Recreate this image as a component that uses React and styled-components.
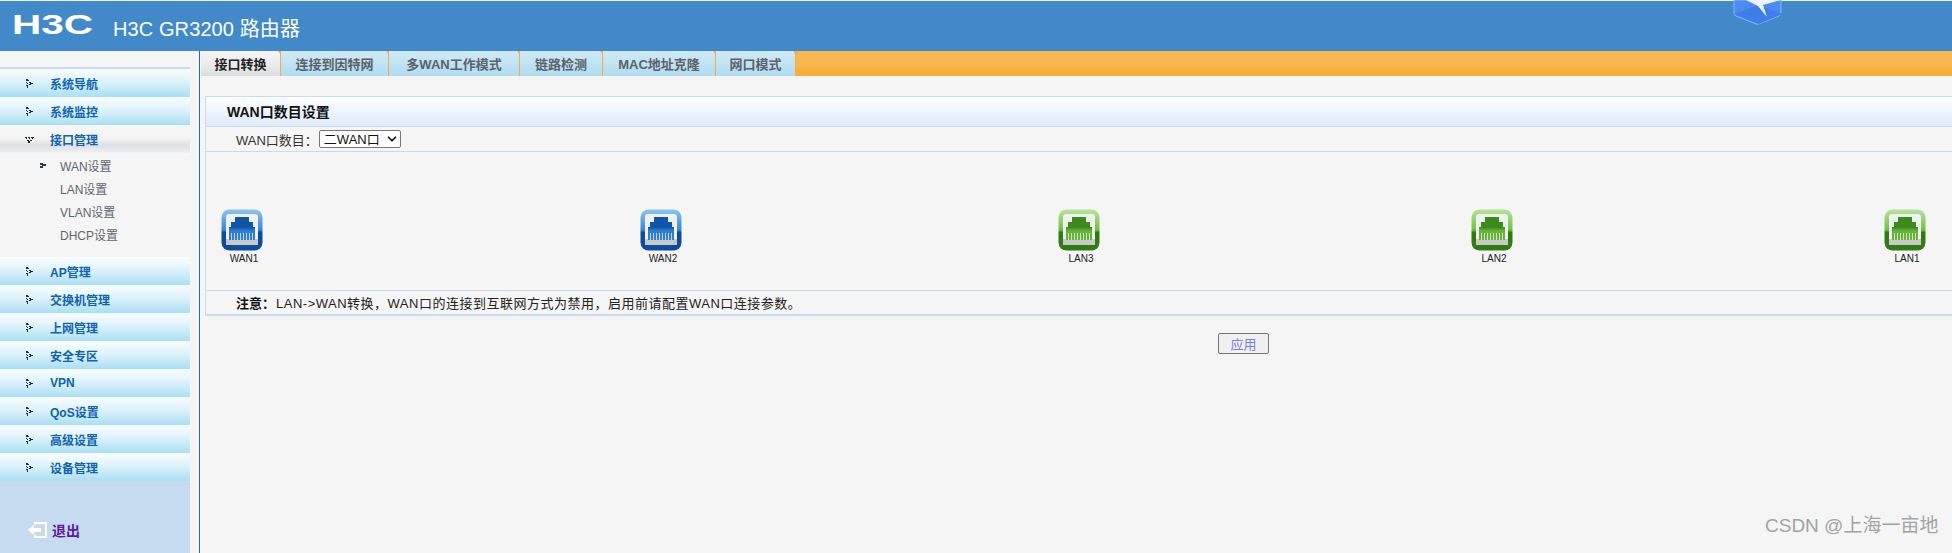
import React from 'react'
import styled, { createGlobalStyle } from 'styled-components'
import { ChevronDown } from 'lucide-react'

const GlobalStyle = createGlobalStyle`
  html, body {
    margin: 0;
    padding: 0;
    background: #f5f5f5;
  }
  body {
    font-family: "Liberation Sans", "Noto Sans CJK SC", sans-serif;
    font-size: 12px;
  }
`

const Page = styled.div`
  position: relative;
  width: 1952px;
  height: 553px;
  overflow: hidden;
  display: flex;
  flex-direction: column;
`

const Header = styled.header`
  height: 50px;
  border-top: 1px solid #f2f2f2;
  background: #4189c9;
  display: flex;
  align-items: center;
  flex-shrink: 0;
`

const Logo = styled.svg`
  margin: 0 0 5px 12px;
  overflow: visible;
  color: #fff;
`

const Title = styled.h1`
  margin: 0 0 0 20px;
  font-size: 20px;
  font-weight: normal;
  letter-spacing: 0.1px;
  color: #fff;
  white-space: nowrap;
  position: relative;
  top: 1px;
`

const Badge = styled.svg`
  position: absolute;
  left: 1733px;
  top: 0;
`

const Body = styled.div`
  flex: 1;
  display: flex;
  min-height: 0;
`

const Side = styled.aside`
  width: 199px;
  border-right: 1px solid #1f6fc0;
  flex-shrink: 0;
`

const Menu = styled.nav`
  width: 190px;
  height: 486px;
  margin-top: 16px;
  border-top: 2px solid #c6dcf0;
  display: flex;
  flex-direction: column;
`

const MenuItem = styled.div`
  height: 28px;
  flex-shrink: 0;
  display: flex;
  align-items: center;
  padding-left: 25px;
  gap: 16px;
  font-weight: bold;
  color: #0f62ae;
  background: ${p =>
    p.$open
      ? 'linear-gradient(#f6f6f6 0%, #f3f3f3 50%, #dde1e4 72%, #eef0f1 100%)'
      : 'linear-gradient(#f9fdff 0%, #e6f6fc 35%, #c2e8f6 75%, #a9dff3 100%)'};
`

const SubList = styled.div`
  padding: 1px 0 11px 40px;
  display: flex;
  flex-direction: column;
`

const SubItem = styled.div`
  height: 23px;
  display: flex;
  align-items: center;
  gap: 14px;
  color: #5f6670;
  padding-left: ${p => (p.$current ? '0' : '20px')};
`

const Logout = styled.div`
  flex: 1;
  background: #c6dbf0;
  padding: 23px 0 0 28px;
  box-sizing: border-box;
  display: flex;
  align-items: center;
  gap: 5px;
  color: #5b1a96;
  font-size: 14px;
  font-weight: bold;
`

const Main = styled.main`
  flex: 1;
  min-width: 0;
  display: flex;
  flex-direction: column;
`

const TabBar = styled.div`
  height: 25px;
  margin-left: 1px;
  display: flex;
  background: linear-gradient(#f8b84f 0%, #f8b850 55%, #f7ae36 78%, #f7ae36 100%);
`

const Tab = styled.div`
  position: relative;
  width: ${p => p.$w}px;
  border-right: 1px solid #f5ab36;
  box-sizing: border-box;
  display: flex;
  align-items: center;
  justify-content: center;
  font-size: 13px;
  font-weight: bold;
  color: ${p => (p.$active ? '#222' : '#5c6166')};
  background: ${p =>
    p.$active
      ? 'linear-gradient(#f5f5f5 0%, #ececec 50%, #d9dcdd 100%)'
      : 'linear-gradient(#cfe9f5 0%, #c0e3f3 50%, #aedcf0 100%)'};

  &::after {
    content: '';
    position: absolute;
    right: -4px;
    top: 0;
    border-left: 3.5px solid transparent;
    border-right: 3.5px solid transparent;
    border-top: 4px solid #f5ab36;
  }
`

const Panel = styled.section`
  margin: 20px 0 0 5px;
  border: 1px solid #c6dcf2;
  border-right: none;
  border-bottom: 2px solid #c6dcf2;
`

const PanelTitle = styled.h2`
  margin: 0;
  height: 28px;
  padding: 0 0 1px 21px;
  display: flex;
  align-items: center;
  font-size: 14px;
  color: #111;
  background: linear-gradient(#fbfdff 0%, #eaf3fc 60%, #dfeafa 100%);
  border-bottom: 1px solid #c6dcf2;
`

const CountRow = styled.div`
  height: 24px;
  padding-left: 30px;
  display: flex;
  align-items: center;
  font-size: 13px;
  color: #333;
  border-bottom: 1px solid #c6dcf2;
`

const SelectWrap = styled.span`
  position: relative;
  display: block;
  width: 82px;
  height: 18px;
  margin-left: 1px;

  svg {
    position: absolute;
    right: 2px;
    top: 2px;
    pointer-events: none;
  }
`

const CountSelect = styled.select`
  appearance: none;
  display: block;
  width: 100%;
  height: 100%;
  padding: 0 0 0 4px;
  font: 13px "Liberation Sans", "Noto Sans CJK SC", sans-serif;
  color: #111;
  background: #fff;
  border: 1px solid #777;
  border-radius: 2px;
`

const Ports = styled.div`
  height: 139px;
  padding: 57px 0 0 15px;
  display: grid;
  grid-template-columns: 419px 418px 413px 413px auto;
  align-items: start;
  box-sizing: border-box;
  border-bottom: 1px solid #c6dcf2;
`

const Port = styled.div`
  width: 42px;
  display: flex;
  flex-direction: column;
  align-items: center;
  font-size: 10px;
  line-height: 13px;
  color: #222;
`

const PortName = styled.span`
  padding: 1px 0 0 4px;
`

const Note = styled.p`
  margin: 0;
  height: 23px;
  padding-left: 30px;
  display: flex;
  align-items: center;
  font-size: 13px;
  color: #222;
`

const NoteLabel = styled.strong`
  color: #111;
`

const NoteText = styled.span`
  letter-spacing: 0.5px;
  margin-left: 1px;
`

const Actions = styled.div`
  padding: 17px 0 0 1018px;
`

const ApplyButton = styled.button`
  width: 51px;
  height: 21px;
  padding: 0;
  font: 13px "Liberation Sans", "Noto Sans CJK SC", sans-serif;
  color: #7a7cf0;
  background: #f0f0f0;
  border: 1px solid #777;
  border-radius: 2px;
`

const Watermark = styled.div`
  position: absolute;
  left: 1765px;
  top: 514px;
  font-size: 19px;
  line-height: 24px;
  color: #a3a3a3;
  white-space: nowrap;
`

const Arrow = ({ open }) => (
  <svg width="9" height="9" viewBox="0 0 9 9" fill="#1c2a3a" style={{ flexShrink: 0 }}>
    {open ? (
      <path d="M0 2h2v1H0zM3 2h2v1H3zM6 2h3v1H6zM1 3h1v1H1zM4 3h1v1H4zM7 3h1v1H7zM2 5h2v1H2zM5 5h2v1H5zM3 6h2v2H3z" />
    ) : (
      <path d="M1 0h2v2H1zM3 1h1v1H3zM1 3h1v1H1zM4 3h2v1H4zM2 4h1v1H2zM5 4h3v1H5zM1 6h2v1H1zM4 5h2v1H4zM2 7h1v2H2z" />
    )}
  </svg>
)

const SubArrow = () => (
  <svg width="6" height="5" viewBox="0 0 6 5" fill="#2a3a52">
    <path d="M0 0h3v1h3v2H3v2H0V3h2V2H0z" />
  </svg>
)

const ExitIcon = () => (
  <svg width="19" height="16" viewBox="0 0 19 16" fill="#fff">
    <path d="M6 0h13v16H6v-3h2v1h9V2H8v1H6z" />
    <path d="M0 8l6-5v3h7v4H6v3z" />
  </svg>
)

const palette = {
  wan: { top: '#8cc6ef', mid: '#3b87d0', bottom: '#0b4c9f', plug: '#0f56a8', plugLight: '#2f7fce', pin: '#bcd4ec' },
  lan: { top: '#b5e59a', mid: '#73bf45', bottom: '#2f7d12', plug: '#3c8a1c', plugLight: '#66b23a', pin: '#cfe8be' }
}

const PortIcon = ({ kind }) => {
  const c = palette[kind]
  const id = `port-${kind}`
  return (
    <svg width="42" height="42" viewBox="0 0 42 42">
      <defs>
        <linearGradient id={id} x1="0" y1="0" x2="0" y2="1">
          <stop offset="0" stopColor={c.top} />
          <stop offset="0.5" stopColor={c.mid} />
          <stop offset="0.56" stopColor={c.bottom} />
          <stop offset="1" stopColor={c.bottom} />
        </linearGradient>
        <linearGradient id={`${id}-plug`} x1="0" y1="0" x2="0" y2="1">
          <stop offset="0" stopColor={c.plug} />
          <stop offset="0.45" stopColor={c.plug} />
          <stop offset="0.6" stopColor={c.plugLight} />
          <stop offset="1" stopColor={c.plugLight} />
        </linearGradient>
      </defs>
      <rect x="0.500" y="0.500" width="41" height="41" rx="8" fill={`url(#${id})`} />
      <rect x="5" y="5" width="32" height="31" rx="3" fill="#f0f0f0" />
      <rect x="5" y="30" width="32" height="6" fill="#c9c9c9" />
      <path d="M14 8h14v5h4v5h2v13H8V18h2v-5h4z" fill={`url(#${id}-plug)`} />
      <path
        d="M10 24h1v7h-1zM13 24h1v7h-1zM16 24h1v7h-1zM19 24h1v7h-1zM22 24h1v7h-1zM25 24h1v7h-1zM28 24h1v7h-1zM31 24h1v7h-1z"
        fill={c.pin}
      />
    </svg>
  )
}

const menuTop = ['系统导航', '系统监控']
const menuBottom = ['AP管理', '交换机管理', '上网管理', '安全专区', 'VPN', 'QoS设置', '高级设置', '设备管理']
const subMenu = ['WAN设置', 'LAN设置', 'VLAN设置', 'DHCP设置']
const tabs = [
  ['接口转换', 80],
  ['连接到因特网', 108],
  ['多WAN工作模式', 131],
  ['链路检测', 83],
  ['MAC地址克隆', 113],
  ['网口模式', 80]
]
const ports = [
  ['WAN1', 'wan'],
  ['WAN2', 'wan'],
  ['LAN3', 'lan'],
  ['LAN2', 'lan'],
  ['LAN1', 'lan']
]

const App = () => (
  <Page>
    <GlobalStyle />
    <Header>
      <Logo width="81" height="24" viewBox="0 0 81 24" fill="currentColor">
        <text x="0" y="22" fontSize="27" fontWeight="bold" textLength="81" lengthAdjust="spacingAndGlyphs">
          H3C
        </text>
      </Logo>
      <Title>H3C GR3200 路由器</Title>
    </Header>
    <Badge width="50" height="25" viewBox="0 0 50 25">
      <path d="M1 0v13q0 2 2 3l20 8h3l20-8q2-1 2-3V0z" fill="#4d8bf2" stroke="#8db4f7" />
      <path d="M1 14L25 5l24 9-23 10z" fill="#3f7de8" />
      <path d="M13 0h35l-18 5 4 12L25 6z" fill="#eef4ff" />
    </Badge>
    <Body>
      <Side>
        <Menu>
          {menuTop.map(name => (
            <MenuItem key={name}>
              <Arrow />
              {name}
            </MenuItem>
          ))}
          <MenuItem $open>
            <Arrow open />
            接口管理
          </MenuItem>
          <SubList>
            {subMenu.map((name, i) => (
              <SubItem key={name} $current={i === 0}>
                {i === 0 && <SubArrow />}
                {name}
              </SubItem>
            ))}
          </SubList>
          {menuBottom.map(name => (
            <MenuItem key={name}>
              <Arrow />
              {name}
            </MenuItem>
          ))}
          <Logout>
            <ExitIcon />
            退出
          </Logout>
        </Menu>
      </Side>
      <Main>
        <TabBar>
          {tabs.map(([name, w], i) => (
            <Tab key={name} $w={w} $active={i === 0}>
              {name}
            </Tab>
          ))}
        </TabBar>
        <Panel>
          <PanelTitle>WAN口数目设置</PanelTitle>
          <CountRow>
            WAN口数目：
            <SelectWrap>
              <CountSelect defaultValue="2">
                <option value="1">一WAN口</option>
                <option value="2">二WAN口</option>
              </CountSelect>
              <ChevronDown size={14} strokeWidth={3} color="#111" />
            </SelectWrap>
          </CountRow>
          <Ports>
            {ports.map(([name, kind]) => (
              <Port key={name}>
                <PortIcon kind={kind} />
                <PortName>{name}</PortName>
              </Port>
            ))}
          </Ports>
          <Note>
            <NoteLabel>注意：</NoteLabel>
            <NoteText>LAN-&gt;WAN转换，WAN口的连接到互联网方式为禁用，启用前请配置WAN口连接参数。</NoteText>
          </Note>
        </Panel>
        <Actions>
          <ApplyButton>应用</ApplyButton>
        </Actions>
      </Main>
    </Body>
    <Watermark>CSDN @上海一亩地</Watermark>
  </Page>
)

export default App
